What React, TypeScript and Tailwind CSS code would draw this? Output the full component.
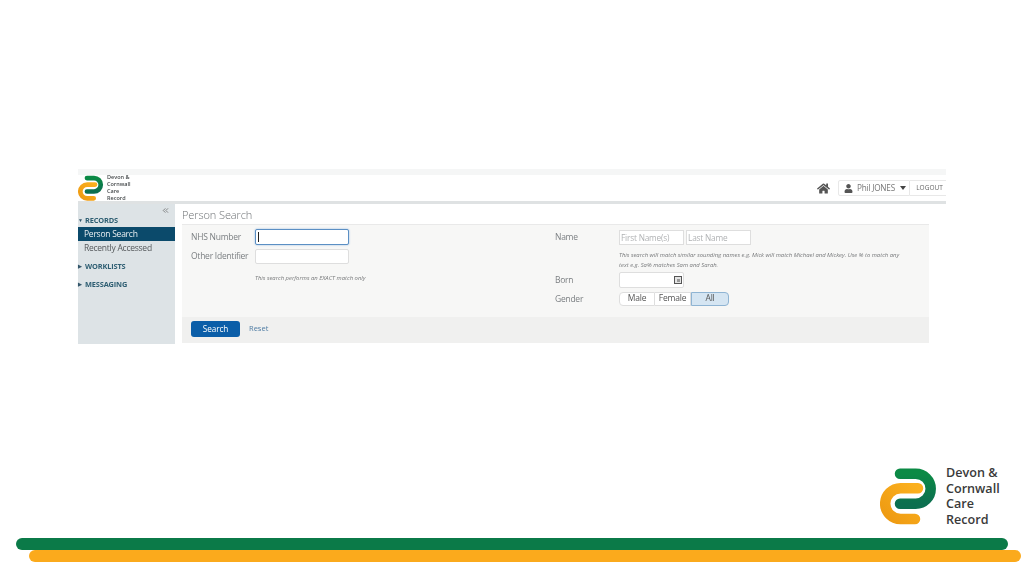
import { ChevronsLeft } from "lucide-react";
import { FaHome, FaUser } from "react-icons/fa";

const sans = "font-['Open_Sans',sans-serif]";

function Logo({ className }: { className: string }) {
  return (
    <svg className={className} viewBox="0 0 58 60" fill="none">
      <defs>
        <linearGradient id="green" x1="0" y1="0" x2="0" y2="1">
          <stop offset="0" stopColor="#0b8a45" />
          <stop offset="1" stopColor="#0c6f50" />
        </linearGradient>
        <linearGradient id="orange" x1="1" y1="0" x2="0" y2="1">
          <stop offset="0" stopColor="#fbb01e" />
          <stop offset="1" stopColor="#ee9a12" />
        </linearGradient>
      </defs>
      <path d="M38 21.2H20.6A15.4 15.4 0 0 0 20.6 52H35" stroke="url(#orange)" strokeWidth="10.5" strokeLinecap="round" />
      <path d="M20 6.7H35.7A15 15 0 0 1 35.7 36.7H20" stroke="url(#green)" strokeWidth="10.5" strokeLinecap="round" />
    </svg>
  );
}

function SideHead({ open, label }: { open?: boolean; label: string }) {
  return (
    <div className="flex items-center h-[14px] pt-[2px] text-[7.4px] tracking-[-0.15px] font-bold text-[#2f5f73]">
      <span className="w-[7px] text-[5px] text-[#33566a]">{open ? "▼" : "▶"}</span>
      {label}
    </div>
  );
}

function Label({ children }: { children: string }) {
  return <div className="w-[64px] pt-[1px] text-[8.5px] tracking-[-0.25px] text-[#7b7f82]">{children}</div>;
}

export default function App() {
  return (
    <div className={`w-[1024px] h-[576px] overflow-hidden bg-white flex flex-col pt-[169px] ${sans}`}>
      {/* embedded screenshot of the record system */}
      <div className="ml-[78px] w-[868px] h-[175px] flex flex-col blur-[0.35px]">
        <div className="h-[6px] bg-[#f5f6f6]" />
        <div className="h-[26px] flex items-center bg-white">
          <Logo className="w-[26px] h-[27px]" />
          <div className="ml-[3px] text-[5.5px] leading-[7px] font-semibold text-[#44484a]">
            <div>Devon &amp;</div>
            <div>Cornwall</div>
            <div>Care</div>
            <div>Record</div>
          </div>
          <div className="ml-auto flex items-center">
            <FaHome className="w-[13px] h-[13px] text-[#555] mr-[8px]" />
            <div className="w-[72px] h-[16px] flex items-center pl-[5px] border border-[#e8e8e8] rounded-l-[2px]">
              <FaUser className="w-[9px] h-[9px] text-[#555]" />
              <span className="ml-[4px] text-[8.2px] tracking-[-0.2px] whitespace-nowrap text-[#777]">Phil JONES</span>
              <span className="ml-[5px] border-x-[3.5px] border-x-transparent border-t-[4px] border-t-[#444]" />
            </div>
            <div className="w-[36px] h-[16px] flex items-center justify-center pl-[3px] border-y border-[#e8e8e8] text-[6.5px] text-[#666]">LOGOUT</div>
          </div>
        </div>
        <div className="h-[3px] bg-[#dfe2e3]" />
        <div className="flex-1 flex min-h-0">
          <div className="w-[97px] bg-[#dde3e6] flex flex-col">
            <div className="h-[9px] pt-[2px] flex justify-end pr-[5px]">
              <ChevronsLeft className="w-[9px] h-[9px] shrink-0 text-[#666]" />
            </div>
            <SideHead open label="RECORDS" />
            <div className="h-[14px] pl-[6px] bg-[#0b4a6b] text-[8.5px] tracking-[-0.25px] leading-[14px] text-[#e8eef1]">Person Search</div>
            <div className="h-[14px] pl-[6px] text-[8.5px] tracking-[-0.25px] leading-[14px] text-[#55595c]">Recently Accessed</div>
            <div className="mt-[4px]">
              <SideHead label="WORKLISTS" />
            </div>
            <div className="mt-[4px]">
              <SideHead label="MESSAGING" />
            </div>
          </div>
          <div className="flex-1 pl-[7px] bg-white flex flex-col">
            <div className="h-[20px] pt-[3px] text-[11px] tracking-[-0.1px] leading-[16px] font-light text-[#6d7174]">Person Search</div>
            <div className="w-[747px] h-[119px] bg-[#f7f7f6] border-t border-[#e9e9e9] flex flex-col">
              <div className="h-[92px] flex pl-[9px] pt-[4px]">
                <div className="w-[364px]">
                  <div className="flex items-center h-[16px]">
                    <Label>NHS Number</Label>
                    <div className="w-[94px] h-[16px] bg-white border border-[#5b8fc4] rounded-[2px] shadow-[0_0_2px_#8db4dc] flex items-center pl-[2px]">
                      <span className="w-px h-[10px] bg-[#222]" />
                    </div>
                  </div>
                  <div className="flex items-center h-[16px] mt-[3px]">
                    <Label>Other Identifier</Label>
                    <div className="w-[94px] h-[15px] bg-white border border-[#dedede] rounded-[2px]" />
                  </div>
                  <div className="ml-[64px] mt-[10px] text-[5.9px] italic text-[#77797b]">This search performs an EXACT match only</div>
                </div>
                <div className="flex-1">
                  <div className="flex items-center h-[16px]">
                    <Label>Name</Label>
                    <div className="w-[65px] h-[15px] bg-white border border-[#dedede] pl-[1px] text-[8.3px] tracking-[-0.2px] leading-[13px] text-[#b0b2b4]">First Name(s)</div>
                    <div className="ml-[2px] w-[65px] h-[15px] bg-white border border-[#dedede] pl-[1px] text-[8.3px] tracking-[-0.2px] leading-[13px] text-[#b0b2b4]">Last Name</div>
                  </div>
                  <div className="ml-[64px] mt-[5px] w-[285px] text-[5.9px] leading-[10px] italic text-[#77797b]">
                    This search will match similar sounding names e.g. Mick will match Michael and Mickey. Use % to match any text e.g. Sa% matches Sam and Sarah.
                  </div>
                  <div className="flex items-center h-[16px] mt-[2px]">
                    <Label>Born</Label>
                    <div className="w-[65px] h-[16px] bg-white border border-[#dedede] rounded-[2px] flex items-center justify-end pr-[1px]">
                      <span className="w-[8px] h-[8px] border border-[#555] bg-[#e4e4e4] flex items-center justify-center">
                        <span className="w-[3px] h-[3px] bg-[#999]" />
                      </span>
                    </div>
                  </div>
                  <div className="flex items-center h-[15px] mt-[3px]">
                    <Label>Gender</Label>
                    <div className="flex h-[14px] text-[8.5px] tracking-[-0.2px] text-[#555]">
                      <div className="w-[36px] bg-white border border-[#dedede] rounded-l-[4px] flex items-center justify-center">Male</div>
                      <div className="w-[36px] bg-white border-y border-r border-[#dedede] flex items-center justify-center">Female</div>
                      <div className="w-[38px] bg-[#d5e5f2] border border-[#8fb4d3] rounded-r-[4px] flex items-center justify-center">All</div>
                    </div>
                  </div>
                </div>
              </div>
              <div className="flex-1 bg-[#f0f0ef] flex items-start pl-[9px] pt-[4px]">
                <div className="w-[49px] h-[16px] rounded-[3px] bg-[#0b5ea8] text-white text-[8.2px] tracking-[-0.1px] flex items-center justify-center">Search</div>
                <div className="ml-[9px] h-[16px] flex items-center text-[7.5px] text-[#4f7ca3]">Reset</div>
              </div>
            </div>
          </div>
        </div>
      </div>

      {/* slide branding */}
      <div className="mt-[123px] h-[60px] flex pl-[880px]">
        <Logo className="w-[58px] h-[60px]" />
        <div className="ml-[8px] -mt-[2px] text-[12.6px] leading-[15.6px] font-semibold text-[#3a3a3a]">
          <div>Devon &amp;</div>
          <div>Cornwall</div>
          <div>Care</div>
          <div>Record</div>
        </div>
      </div>
      <div className="mt-[11px] ml-[16px] w-[992px] h-[12px] rounded-full bg-[#0b7a48]" />
      <div className="ml-[29px] w-[992px] h-[12px] rounded-full bg-[#fbaa1c]" />
    </div>
  );
}
